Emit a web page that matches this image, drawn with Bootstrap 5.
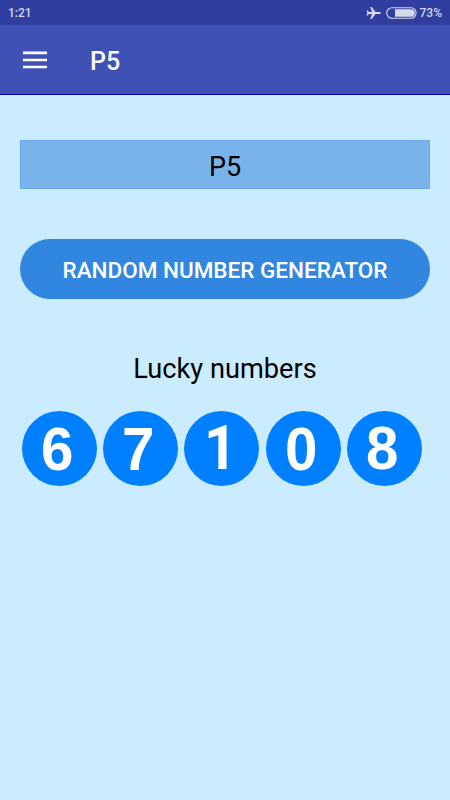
<!DOCTYPE html>
<html lang="en">
<head>
<meta charset="utf-8">
<meta name="viewport" content="width=device-width, initial-scale=1">
<title>P5</title>
<link href="https://cdn.jsdelivr.net/npm/bootstrap@5.3.0/dist/css/bootstrap.min.css" rel="stylesheet">
<style>
body { background: #cbecfe; color: #000; font-family: Roboto, "Liberation Sans", sans-serif; min-height: 800px; overflow: hidden; }
.status-bar { height: 25px; background: #303f9f; color: #d6d9ec; font-size: 12px; font-weight: 500; line-height: 25px; padding: 0 8px; }
.status-bar span { padding-top: 1px; line-height: 24px; }
.status-bar svg { display: block; }
.status-icons { gap: 5px; }
.battery { margin-right: -2px; }
.app-bar { height: 70px; background: #3f51b5; border-bottom: 1px solid #0202a0; padding: 0 23px; }
.menu-btn { width: 24px; height: 18px; }
.menu-btn svg { display: block; }
.app-title { font-size: 25px; font-weight: 500; line-height: 30px; margin-left: 43px; padding-top: 5px; }
.screen { padding: 45px 20px 0; }
.game-name { height: 49px; background: #7ab3eb; border: 1px solid #6aaaec; font-size: 27px; line-height: 53px; }
.generate { height: 60px; margin-top: 50px; background: #3187df; border: 0; font-size: 22.5px; font-weight: 500; line-height: 1; padding: 3px 0 0; --bs-btn-hover-bg: #3187df; }
.caption { font-size: 27.2px; line-height: 32px; margin-top: 54px; }
.balls { gap: 6.3px; margin-top: 26px; padding-left: 1.7px; }
.ball { width: 75px; height: 75px; flex: none; background: #0080ff; font: bold 62px/73px "Liberation Sans", Arial, sans-serif; padding-right: 4px; }
.ball span { display: inline-block; transform: scaleX(.94); }
.ball-low { line-height: 75px; }
.ball-one { font: bold 61px/74px Roboto, sans-serif; padding-right: 2px; }
</style>
</head>
<body>
<header class="text-white">
  <div class="status-bar d-flex justify-content-between align-items-center">
    <span>1:21</span>
    <div class="status-icons d-flex align-items-center">
      <svg width="15" height="14" viewBox="0 0 15 14" aria-hidden="true"><path fill="#d6d9ec" d="M14.5 5.9V8H9.5L5.8 13H4.2L6 8H3L1.5 9.6H.5L1.3 7 .5 4.4h1L3 6h3L4.2 1h1.6l3.7 4.9z"/></svg>
      <svg class="battery" width="31" height="12" viewBox="0 0 31 12" aria-hidden="true"><rect x=".7" y=".7" width="29.4" height="10.6" rx="5.3" fill="none" stroke="#d6d9ec" stroke-width="1.1"/><path fill="#d6d9ec" d="M9 2.2H25a3.8 3.8 0 0 1 0 7.6H9z"/></svg>
      <span>73%</span>
    </div>
  </div>
  <nav class="app-bar d-flex align-items-center">
    <button class="menu-btn btn p-0 border-0" type="button" aria-label="Menu">
      <svg width="24" height="18" viewBox="0 0 24 18"><path d="M0 1.9h24M0 9h24M0 16h24" stroke="#fff" stroke-width="2.6"/></svg>
    </button>
    <h1 class="app-title mb-0">P5</h1>
  </nav>
</header>
<main class="screen">
  <div class="game-name text-center">P5</div>
  <button class="generate btn btn-primary rounded-pill w-100 d-block text-uppercase" type="button">Random number generator</button>
  <h2 class="caption text-center fw-normal mb-0">Lucky numbers</h2>
  <div class="balls d-flex">
    <div class="ball ball-low rounded-circle text-white text-center"><span>6</span></div>
    <div class="ball ball-low rounded-circle text-white text-center"><span>7</span></div>
    <div class="ball ball-one rounded-circle text-white text-center"><span>1</span></div>
    <div class="ball ball-low rounded-circle text-white text-center"><span>0</span></div>
    <div class="ball rounded-circle text-white text-center"><span>8</span></div>
  </div>
</main>
<script src="https://cdn.jsdelivr.net/npm/bootstrap@5.3.0/dist/js/bootstrap.bundle.min.js"></script>
</body>
</html>
